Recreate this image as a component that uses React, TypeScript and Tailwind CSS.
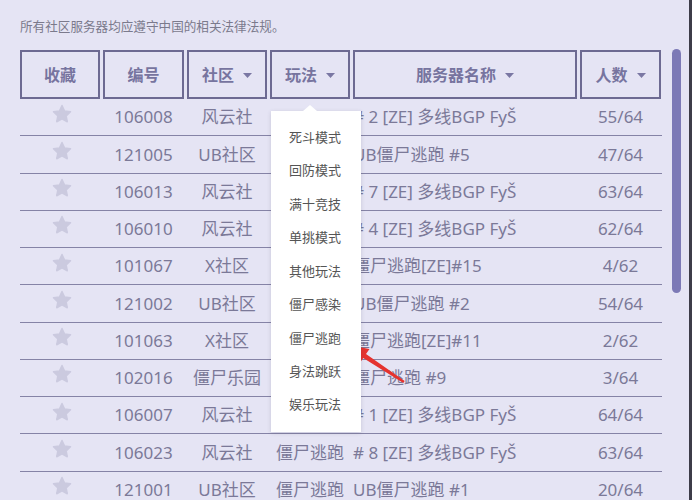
import React from "react";

const cols = "grid grid-cols-[80px_81px_80px_80px_224px_81px] gap-x-[3px]";

const rows = [
  ["106008", "风云社", "", "# 2 [ZE] 多线BGP FyŠ", "55/64"],
  ["121005", "UB社区", "", "UB僵尸逃跑 #5", "47/64"],
  ["106013", "风云社", "", "# 7 [ZE] 多线BGP FyŠ", "63/64"],
  ["106010", "风云社", "", "# 4 [ZE] 多线BGP FyŠ", "62/64"],
  ["101067", "X社区", "", "僵尸逃跑[ZE]#15", "4/62"],
  ["121002", "UB社区", "", "UB僵尸逃跑 #2", "54/64"],
  ["101063", "X社区", "", "僵尸逃跑[ZE]#11", "2/62"],
  ["102016", "僵尸乐园", "", "僵尸逃跑 #9", "3/64"],
  ["106007", "风云社", "", "# 1 [ZE] 多线BGP FyŠ", "64/64"],
  ["106023", "风云社", "僵尸逃跑", "# 8 [ZE] 多线BGP FyŠ", "63/64"],
  ["121001", "UB社区", "僵尸逃跑", "UB僵尸逃跑 #1", "20/64"],
];

const modes = ["死斗模式", "回防模式", "满十竞技", "单挑模式", "其他玩法", "僵尸感染", "僵尸逃跑", "身法跳跃", "娱乐玩法"];

function Caret() {
  return (
    <svg width="9" height="5" viewBox="0 0 9 5" className="ml-[9px] mt-[2px]">
      <path d="M0 0 H9 L4.5 5 Z" fill="#7a77a3" />
    </svg>
  );
}

function Star() {
  return (
    <svg width="20" height="20" viewBox="0 0 24 24" className="ml-[3px] mb-[7px]">
      <path
        d="M12 1.8l3.1 6.6 7.1.9-5.2 4.9 1.3 7.1L12 17.8l-6.3 3.5 1.3-7.1-5.2-4.9 7.1-.9z"
        fill="#cbcadf"
        stroke="#cbcadf"
        strokeWidth="1.8"
        strokeLinejoin="round"
      />
    </svg>
  );
}

function HeadCell({ label, caret, children }: { label: string; caret?: boolean; children?: React.ReactNode }) {
  return (
    <div className="relative flex h-[49px] items-center justify-center border-2 border-[#6d6a92] text-[16px] font-bold text-[#77749f]">
      <span>{label}</span>
      {caret && <Caret />}
      {children}
    </div>
  );
}

export default function App() {
  return (
    <div
      className="relative flex h-[500px] w-[692px] overflow-hidden bg-[#e5e4f4]"
      style={{ fontFamily: '"Noto Sans", "Noto Sans CJK SC", sans-serif' }}
    >
      <div className="flex flex-col pl-[20px] pt-[17px]">
        <div className="h-[20px] text-[12.6px] leading-[20px] text-[#7b7a8c]">所有社区服务器均应遵守中国的相关法律法规。</div>
        <div className={`${cols} mt-[13px]`}>
          <HeadCell label="收藏" />
          <HeadCell label="编号" />
          <HeadCell label="社区" caret />
          <HeadCell label="玩法" caret>
            <div className="absolute left-[-1px] top-[59px] z-10 flex h-[321px] w-[90px] flex-col bg-white py-[10px] pl-[18px] text-[13px] font-normal text-[#555555] shadow-[0_1px_4px_rgba(60,60,90,0.18)]">
              <svg width="14" height="6" viewBox="0 0 14 6" className="absolute left-[32px] top-[-6px]">
                <path d="M0 6 L7 0 L14 6 Z" fill="#ffffff" />
              </svg>
              {modes.map((m) => (
                <div key={m} className="flex h-[33.5px] items-center">
                  {m}
                </div>
              ))}
            </div>
          </HeadCell>
          <HeadCell label="服务器名称" caret />
          <HeadCell label="人数" caret />
        </div>
        <div className="flex flex-col text-[17px] text-[#7b7998]">
          {rows.map((r, i) => (
            <div key={i} className={`${cols} h-[37.25px] w-[642px] shrink-0 items-center border-b border-[#8583a6]`}>
              <div className="flex justify-center">
                <Star />
              </div>
              <div className="text-center">{r[0]}</div>
              <div className="text-center">{r[1]}</div>
              <div className="whitespace-nowrap text-center">{r[2]}</div>
              <div className="whitespace-nowrap">{r[3]}</div>
              <div className="text-center">{r[4]}</div>
            </div>
          ))}
        </div>
      </div>
      <div className="ml-[10px] mt-[49px] h-[244px] w-[9px] rounded-full bg-[#7c79b6]" />
      <div className="ml-auto h-full w-[3px] bg-[#3d3c48]" />
      <svg className="pointer-events-none absolute left-0 top-0" width="692" height="500" viewBox="0 0 692 500">
        <path
          d="M348 345 L369.5 349 L366 354 L404.7 381 L403.3 383 L363.2 358.1 L360.2 362.6 Z"
          fill="#e5332f"
        />
      </svg>
    </div>
  );
}
